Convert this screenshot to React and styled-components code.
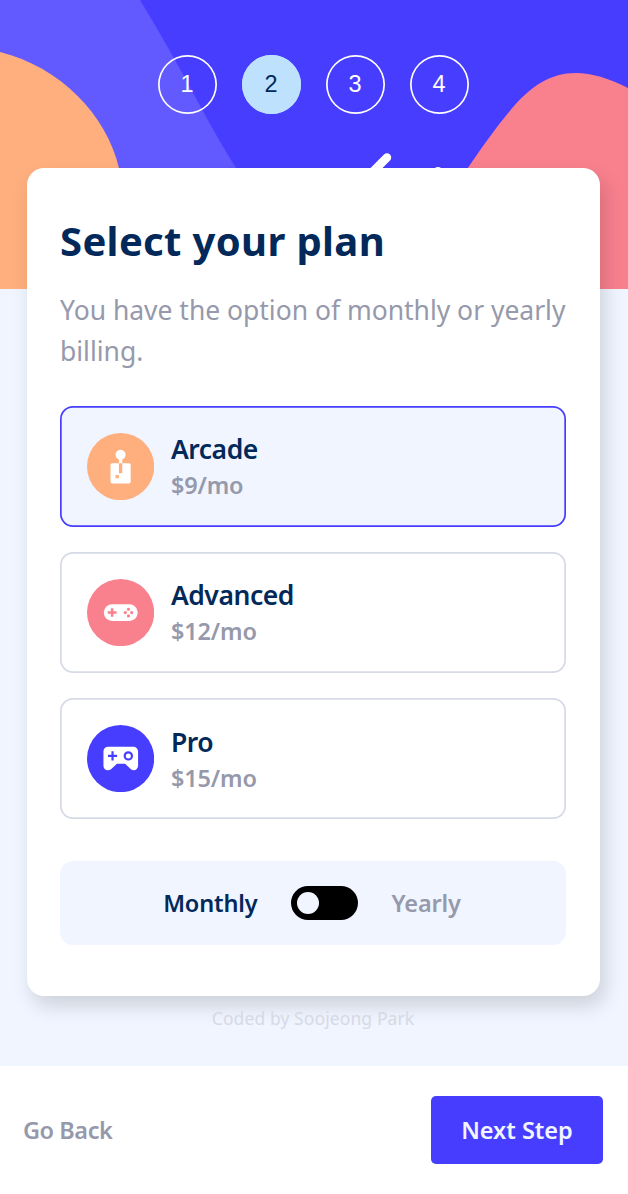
import React, { useState } from "react";
import styled, { createGlobalStyle } from "styled-components";

const GlobalStyle = createGlobalStyle`
  *, *::before, *::after { box-sizing: border-box; }
  body { margin: 0; background: #f0f5ff; font-family: "Noto Sans", sans-serif; color: #02295a; }
  button { font-family: inherit; border: 0; cursor: pointer; }
`;

const Page = styled.div`
  position: relative;
  display: flex;
  flex-direction: column;
  height: 1194px;
  overflow: hidden;
`;

const Backdrop = styled.svg`
  position: absolute;
  inset: 0 auto auto 0;
  width: 628px;
  height: 289px;
`;

const Steps = styled.ol`
  position: relative;
  display: flex;
  justify-content: center;
  gap: 25px;
  list-style: none;
  margin: 0;
  padding: 54.5px 2px 0 0;
  height: 168px;
`;

const Step = styled.li`
  width: 59px;
  height: 59px;
  display: grid;
  place-items: center;
  border-radius: 50%;
  box-shadow: inset 0 0 0 1.7px ${(p) => (p.$active ? "#bee2fd" : "#fff")};
  background: ${(p) => (p.$active ? "#bee2fd" : "transparent")};
  color: ${(p) => (p.$active ? "#02295a" : "#fff")};
  font: 400 23.5px "Liberation Sans", sans-serif;
`;

const Card = styled.main`
  position: relative;
  display: flex;
  flex-direction: column;
  width: 573px;
  height: 827.5px;
  margin-left: 26.5px;
  padding: 49px 33.5px 50px;
  border-radius: 17px;
  background: #fff;
  box-shadow: 5px 10px 20px rgba(0, 0, 0, 0.15);
`;

const Title = styled.h1`
  margin: 0;
  font-size: 40px;
  line-height: 48px;
  font-weight: 700;
  letter-spacing: 0.35px;
  white-space: nowrap;
`;

const Description = styled.p`
  margin: 25px 0 0;
  color: #9699ab;
  font-size: 26.5px;
  line-height: 41px;
  letter-spacing: -0.02px;
  white-space: nowrap;
`;

const Plans = styled.div`
  display: flex;
  flex-direction: column;
  gap: 25.3px;
  margin-top: 34px;
`;

const Plan = styled.button`
  display: flex;
  align-items: center;
  gap: 17px;
  height: 120.8px;
  padding: 0 26.7px;
  text-align: left;
  border-radius: 13px;
  box-shadow: inset 0 0 0 1.7px ${(p) => (p.$active ? "#473dff" : "#d6d9e6")};
  background: ${(p) => (p.$active ? "#f0f5ff" : "#fff")};
`;

const PlanIcon = styled.svg`
  width: 67.2px;
  height: 67.2px;
  flex: none;
`;

const PlanText = styled.span`
  display: flex;
  flex-direction: column;
  padding-top: 2px;
`;

const PlanName = styled.span`
  color: #02295a;
  font-size: 26.5px;
  font-weight: 600;
  line-height: 36px;
  letter-spacing: -0.45px;
`;

const PlanPrice = styled.span`
  color: #9699ab;
  font-size: 23.5px;
  font-weight: 600;
  line-height: 36px;
  letter-spacing: -0.15px;
`;

const Billing = styled.div`
  display: grid;
  grid-template-columns: 1fr 67px 1fr;
  align-items: center;
  column-gap: 33.5px;
  height: 84px;
  margin-top: 42px;
  padding-left: 23px;
  border-radius: 13px;
  background: #f0f5ff;
`;

const Period = styled.span`
  justify-self: ${(p) => p.$side};
  color: ${(p) => (p.$active ? "#02295a" : "#9699ab")};
  font-size: 23.5px;
  font-weight: 600;
  letter-spacing: -0.15px;
`;

const Switch = styled.button`
  display: flex;
  justify-content: ${(p) => (p.$on ? "flex-end" : "flex-start")};
  width: 67px;
  height: 33.5px;
  padding: 5.6px;
  border-radius: 17px;
  background: #000;
`;

const Knob = styled.span`
  width: 22.4px;
  height: 22.4px;
  border-radius: 50%;
  background: #f0f5ff;
`;

const Credit = styled.p`
  position: relative;
  margin: 10.5px 2px 0 0;
  color: #d6d9e6;
  font-size: 17.5px;
  line-height: 24px;
  letter-spacing: 0.1px;
  text-align: center;
`;

const Footer = styled.footer`
  display: flex;
  align-items: center;
  justify-content: space-between;
  height: 128px;
  margin-top: auto;
  padding: 0 25px 0 23px;
  background: #fff;
`;

const BackButton = styled.button`
  padding: 0;
  background: none;
  color: #9699ab;
  font-size: 23.5px;
  font-weight: 600;
  letter-spacing: -0.45px;
`;

const NextButton = styled.button`
  width: 172px;
  height: 68px;
  padding: 0;
  border-radius: 5px;
  background: #473dff;
  color: #f0f5ff;
  font-size: 23.5px;
  font-weight: 600;
`;

const ArcadeIcon = () => (
  <PlanIcon viewBox="0 0 40 40">
    <circle cx="20" cy="20" r="20" fill="#ffaf7e" />
    <path fill="#fff" d="M24.995 18.005h-3.998v5.998h-2v-5.998H15a1 1 0 0 0-1 1V29a1 1 0 0 0 1 1h9.995a1 1 0 0 0 1-1v-9.995a1 1 0 0 0-1-1Zm-5.997 8.996h-2v-1.999h2v2Zm2-11.175a2.999 2.999 0 1 0-2 0v2.18h2v-2.18Z" />
  </PlanIcon>
);

const AdvancedIcon = () => (
  <PlanIcon viewBox="0 0 40 40">
    <circle cx="20" cy="20" r="20" fill="#f9818e" />
    <rect x="10" y="15" width="20.2" height="10" rx="5" fill="#fff" />
    <g fill="#f9818e">
      <path d="M14.2 17.4h1.5v1.8h1.9v1.5h-1.9v1.8h-1.5v-1.8h-1.9v-1.500h1.900z" />
      <circle cx="24.7" cy="18" r=".95" />
      <circle cx="24.7" cy="22" r=".95" />
      <circle cx="22.800" cy="20" r=".95" />
      <circle cx="26.600" cy="20" r=".95" />
    </g>
  </PlanIcon>
);

const ProIcon = () => (
  <PlanIcon viewBox="0 0 40 40">
    <circle cx="20" cy="20" r="20" fill="#473dff" />
    <path fill="#fff" d="M12.700 13h15a2.700 2.700 0 0 1 2.700 2.700v8.600c0 2.400-2.700 3.500-4.400 1.900l-3.300-3.100h-4.900l-3.500 3.200c-1.700 1.500-4.500.4-4.500-1.900v-8.700a2.900 2.900 0 0 1 2.900-2.700Z" />
    <path d="M15.200 15.700v5.400M12.500 18.400h5.400" stroke="#473dff" strokeWidth="1.300" />
    <circle cx="24.600" cy="18.400" r="2.150" fill="none" stroke="#473dff" strokeWidth="1.300" />
  </PlanIcon>
);

const plans = [
  { name: "Arcade", price: "$9/mo", Icon: ArcadeIcon },
  { name: "Advanced", price: "$12/mo", Icon: AdvancedIcon },
  { name: "Pro", price: "$15/mo", Icon: ProIcon },
];

export default function App() {
  const [selected, setSelected] = useState("Arcade");
  const [yearly, setYearly] = useState(false);
  return (
    <>
      <GlobalStyle />
      <Page>
        <Backdrop viewBox="0 0 628 289">
          <path fill="#473dff" d="M0 0h628v289H0z" />
          <path fill="#6259ff" d="M0 0h140C180 65 202 113 236 168L300 289H0z" />
          <path fill="#ffaf7e" d="M0 52C60 67 106 114 119 168L125 289H0z" />
          <path fill="#f9818e" d="M440 210C457 185 483 143 509 112C544 68 579 63 628 88V289H440z" />
          <path d="M387 157.500l-28 28" stroke="#fff" strokeWidth="8.500" strokeLinecap="round" />
          <circle cx="438" cy="172" r="5" fill="#fff" />
        </Backdrop>
        <Steps>
          {[1, 2, 3, 4].map((n) => (
            <Step key={n} $active={n === 2}>{n}</Step>
          ))}
        </Steps>
        <Card>
          <Title>Select your plan</Title>
          <Description>
            You have the option of monthly or yearly
            <br />
            billing.
          </Description>
          <Plans>
            {plans.map(({ name, price, Icon }) => (
              <Plan key={name} $active={selected === name} onClick={() => setSelected(name)}>
                <Icon />
                <PlanText>
                  <PlanName>{name}</PlanName>
                  <PlanPrice>{price}</PlanPrice>
                </PlanText>
              </Plan>
            ))}
          </Plans>
          <Billing>
            <Period $side="end" $active={!yearly}>Monthly</Period>
            <Switch $on={yearly} aria-label="Yearly billing" onClick={() => setYearly(!yearly)}>
              <Knob />
            </Switch>
            <Period $side="start" $active={yearly}>Yearly</Period>
          </Billing>
        </Card>
        <Credit>Coded by Soojeong Park</Credit>
        <Footer>
          <BackButton>Go Back</BackButton>
          <NextButton>Next Step</NextButton>
        </Footer>
      </Page>
    </>
  );
}
